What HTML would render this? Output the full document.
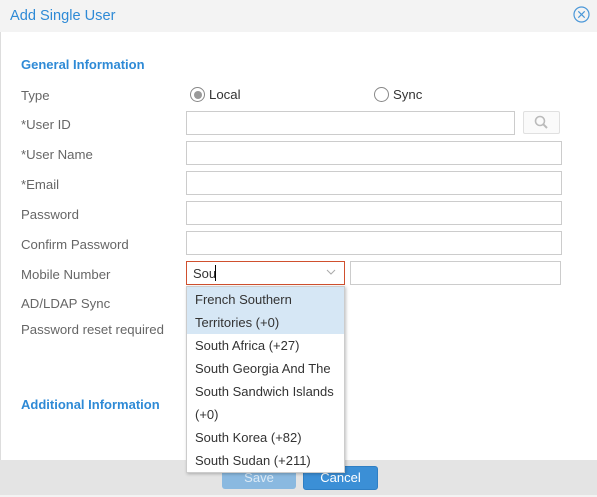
<!DOCTYPE html>
<html><head><style>
*{box-sizing:border-box;margin:0;padding:0}
body{width:597px;height:497px;background:#fff;font-family:"Liberation Sans",sans-serif;font-size:13px;color:#555;position:relative;overflow:hidden}
.a{position:absolute}
.inp{position:absolute;border:1px solid #ccc;background:#fff;height:24px}
.lbl{position:absolute;left:21px;font-size:13.2px;color:#666}
.dd div{padding:0 8px;line-height:23px;color:#333;font-size:13px}
</style></head><body>
<div class="a" style="left:0;top:0;width:597px;height:32px;background:#f3f3f3"></div>
<div class="a" style="left:10px;top:8px;font-size:14.6px;color:#2e8ad6">Add Single User</div>
<svg class="a" style="left:573px;top:6px" width="17" height="17" viewBox="0 0 17 17"><circle cx="8.5" cy="8.5" r="7.5" fill="none" stroke="#4a97d8" stroke-width="1.2"/><path d="M5.3 5.3L11.7 11.7M11.7 5.3L5.3 11.7" stroke="#4a97d8" stroke-width="1.2"/></svg>
<div class="a" style="left:0;top:32px;width:1px;height:465px;background:#ddd"></div>
<div class="a" style="left:21px;top:57px;font-size:13px;font-weight:bold;color:#2e8ad6">General Information</div>
<div class="lbl" style="top:88px">Type</div>
<div class="a" style="left:190px;top:87px;width:15px;height:15px;border:1px solid #888;border-radius:50%;"><div style="margin:2.5px;width:8px;height:8px;border-radius:50%;background:#999"></div></div>
<div class="a" style="left:209px;top:87px;color:#333;font-size:13.2px">Local</div>
<div class="a" style="left:374px;top:87px;width:15px;height:15px;border:1px solid #888;border-radius:50%"></div>
<div class="a" style="left:393px;top:87px;color:#333;font-size:13.2px">Sync</div>
<div class="lbl" style="top:117px">*User ID</div>
<div class="inp" style="left:186px;top:111px;width:329px"></div>
<div class="a" style="left:523px;top:111px;width:37px;height:23px;border:1px solid #e0e0e0;border-radius:2px;background:#fafafa"></div>
<svg class="a" style="left:533px;top:114px" width="17" height="17" viewBox="0 0 17 17"><circle cx="7" cy="7" r="4.5" fill="none" stroke="#bbb" stroke-width="1.6"/><path d="M10.3 10.3L14 14" stroke="#bbb" stroke-width="2"/></svg>
<div class="lbl" style="top:147px">*User Name</div>
<div class="inp" style="left:186px;top:141px;width:376px"></div>
<div class="lbl" style="top:177px">*Email</div>
<div class="inp" style="left:186px;top:171px;width:376px"></div>
<div class="lbl" style="top:207px">Password</div>
<div class="inp" style="left:186px;top:201px;width:376px"></div>
<div class="lbl" style="top:237px">Confirm Password</div>
<div class="inp" style="left:186px;top:231px;width:376px"></div>
<div class="lbl" style="top:267px">Mobile Number</div>
<div class="inp" style="left:186px;top:261px;width:159px;border-color:#d0502e"></div>
<div class="a" style="left:193px;top:266px;color:#333">Sou</div>
<div class="a" style="left:215px;top:265px;width:1px;height:16px;background:#000"></div>
<svg class="a" style="left:326px;top:269px" width="10" height="7"><path d="M1 1L5 5L9 1" fill="none" stroke="#aaa"/></svg>
<div class="inp" style="left:350px;top:261px;width:211px"></div>
<div class="lbl" style="top:296px">AD/LDAP Sync</div>
<div class="lbl" style="top:322px">Password reset required</div>
<div class="a" style="left:21px;top:397px;font-size:13px;font-weight:bold;color:#2e8ad6">Additional Information</div>
<div class="a" style="left:0;top:460px;width:597px;height:37px;background:#e4e4e4"></div>
<div class="a" style="left:0;top:495px;width:597px;height:2px;background:#f3f3f3"></div>
<div class="a" style="left:222px;top:466px;width:74px;height:23px;background:#8ab9e0;border-radius:3px;color:#dceaf6;text-align:center;line-height:23px;font-size:13px">Save</div>
<div class="a" style="left:303px;top:466px;width:75px;height:24px;background:#3b8fd6;border:1px solid #2f7fc4;border-radius:3px;color:#fff;text-align:center;line-height:22px;font-size:13px">Cancel</div>
<div class="a dd" style="left:186px;top:286px;width:159px;height:187px;background:#fff;border:1px solid #ccc;box-shadow:1px 1px 3px rgba(0,0,0,.25);padding-top:1px">
<div style="background:#d6e7f5;margin-top:-1px;padding-top:1px">French Southern Territories (+0)</div>
<div>South Africa (+27)</div>
<div>South Georgia And The South Sandwich Islands (+0)</div>
<div>South Korea (+82)</div>
<div>South Sudan (+211)</div>
</div>
</body></html>
